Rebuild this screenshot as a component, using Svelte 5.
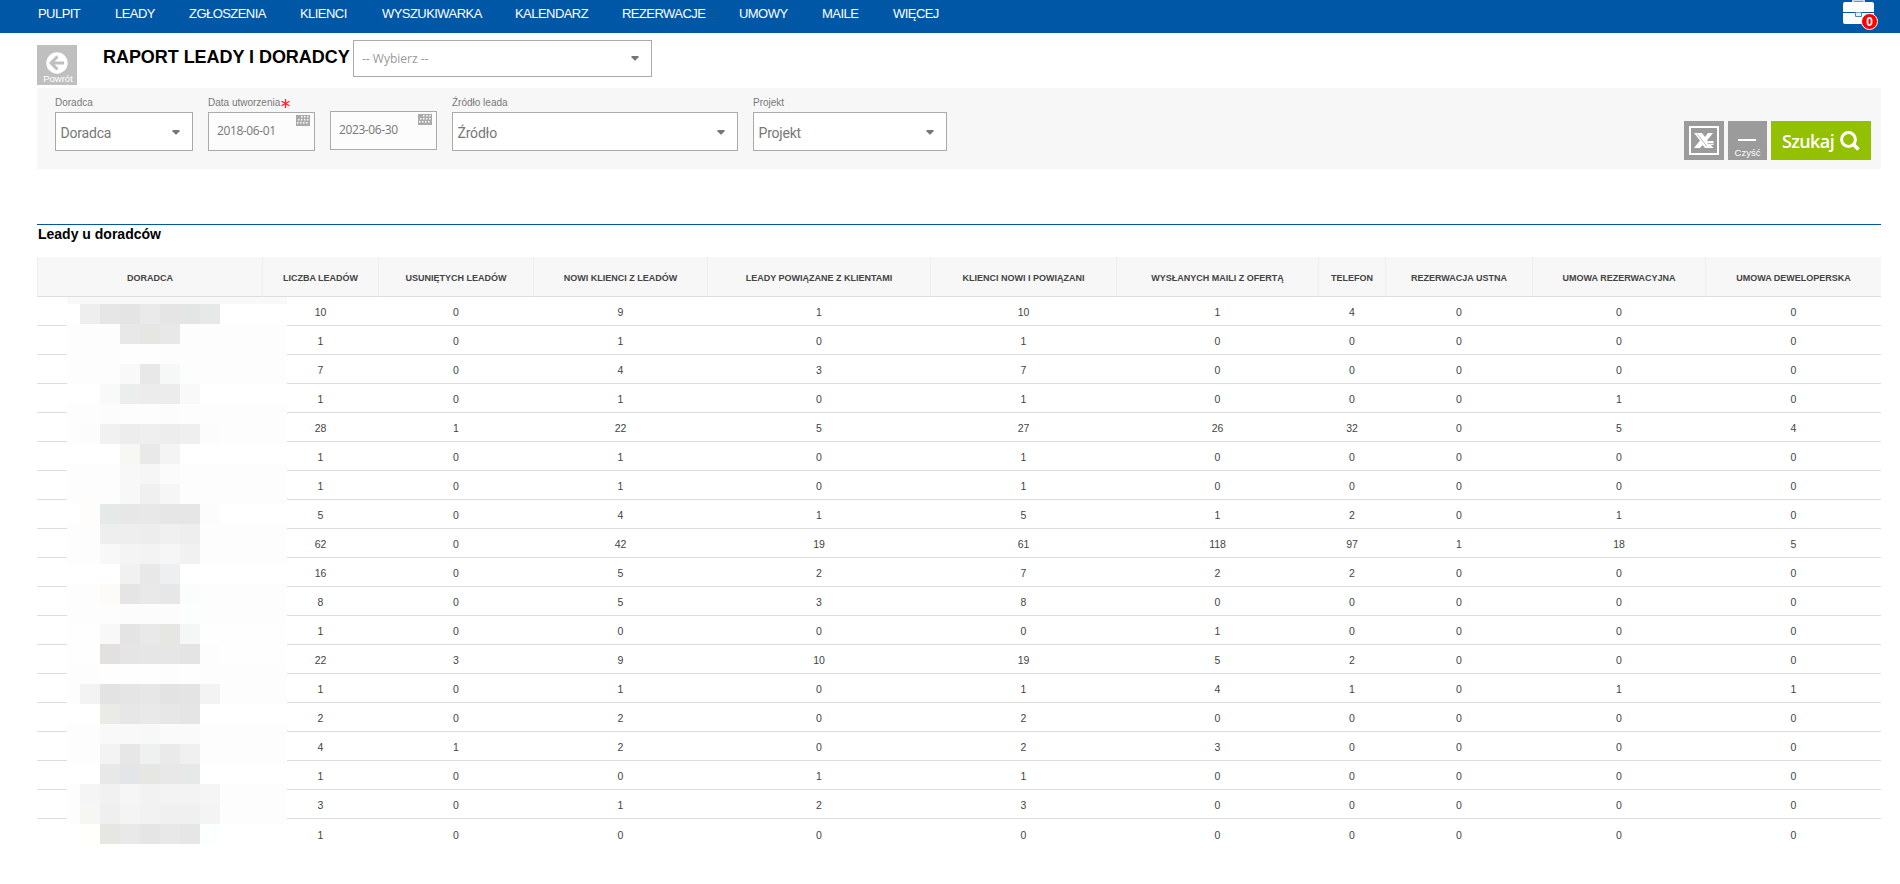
<script>
  const menu = [
    ['PULPIT', 38], ['LEADY', 115], ['ZGŁOSZENIA', 189], ['KLIENCI', 300],
    ['WYSZUKIWARKA', 382], ['KALENDARZ', 515], ['REZERWACJE', 622],
    ['UMOWY', 739], ['MAILE', 822], ['WIĘCEJ', 893],
  ].map(([label, start], i, all) => ({ label, width: (all[i + 1]?.[1] ?? start + 80) - start }));

  const columns = [
    ['DORADCA', 225], ['LICZBA LEADÓW', 116], ['USUNIĘTYCH LEADÓW', 155],
    ['NOWI KLIENCI Z LEADÓW', 174], ['LEADY POWIĄZANE Z KLIENTAMI', 223],
    ['KLIENCI NOWI I POWIĄZANI', 186], ['WYSŁANYCH MAILI Z OFERTĄ', 202],
    ['TELEFON', 67], ['REZERWACJA USTNA', 147], ['UMOWA REZERWACYJNA', 173],
    ['UMOWA DEWELOPERSKA', 176],
  ];

  const rows = [
    [10, 0, 9, 1, 10, 1, 4, 0, 0, 0],
    [1, 0, 1, 0, 1, 0, 0, 0, 0, 0],
    [7, 0, 4, 3, 7, 0, 0, 0, 0, 0],
    [1, 0, 1, 0, 1, 0, 0, 0, 1, 0],
    [28, 1, 22, 5, 27, 26, 32, 0, 5, 4],
    [1, 0, 1, 0, 1, 0, 0, 0, 0, 0],
    [1, 0, 1, 0, 1, 0, 0, 0, 0, 0],
    [5, 0, 4, 1, 5, 1, 2, 0, 1, 0],
    [62, 0, 42, 19, 61, 118, 97, 1, 18, 5],
    [16, 0, 5, 2, 7, 2, 2, 0, 0, 0],
    [8, 0, 5, 3, 8, 0, 0, 0, 0, 0],
    [1, 0, 0, 0, 0, 1, 0, 0, 0, 0],
    [22, 3, 9, 10, 19, 5, 2, 0, 0, 0],
    [1, 0, 1, 0, 1, 4, 1, 0, 1, 1],
    [2, 0, 2, 0, 2, 0, 0, 0, 0, 0],
    [4, 1, 2, 0, 2, 3, 0, 0, 0, 0],
    [1, 0, 0, 1, 1, 0, 0, 0, 0, 0],
    [3, 0, 1, 2, 3, 0, 0, 0, 0, 0],
    [1, 0, 0, 0, 0, 0, 0, 0, 0, 0],
  ];

  // Privacy mosaic: row background, then seven 20px tiles ("-" keeps the background)
  const mosaic = [
    'ff ee e6 e4 ea e5 e4e6e5 e7e9e8',
    'fd - - e8 e6e6e3 e8 - -',
    'fd - - fe fe fd - -',
    'fd - - f9 e8 f5f8f7 - -',
    'ff - f9 ebeeed ec ec f9 -',
    'fd - fc fd fd fc fd -',
    'fd fc f1 ed ef ed ef fc',
    'ff - - f7f7f3 e9 f4 - -',
    'fd - - f8 f6 fb - -',
    'fd - - f8 f0 f6 - -',
    'ff fffdfb e5e9e8 e7 e8 e6 e6 fc',
    'fd - ee ee ed f0 ee -',
    'fd - f8 f4 f3 f6 f1 -',
    'ff - - f1 e8 edeff1 - -',
    'fd - fcfbf8 e5 e9 e7 fafdfb -',
    'fd - fd fc fc fc fbfefd -',
    'fe - f8 e4 e9 e6e6e3 f4f7f6 -',
    'fe - e3e1e0 e5 e6 e6 e4 fd',
    'fd - fe fe fe fd fe -',
    'fd f3 e3 e5 e7 e3 e4 f3',
    'ff - eaeae7 e7 e9 e7 e5 -',
    'fd - f9 f9 f8 fa fa -',
    'fd - f3 e7 eef1ef ea f0 -',
    'ff - e8 e4e5e8 e6e6e3 e8 e6e9e8 -',
    'fd f5 f1 f6 f2 f3 f3 f5',
    'fd f6f6f2 ef f4 f2 f0 f0 f4',
    'ff fffffb e6e6e3 e9 e5 e8 e6 fbfffe',
  ].map((line) => line.split(' ').map((c) => (c === '-' ? 'transparent' : '#' + (c.length === 2 ? c.repeat(3) : c))));

  const dots = [
    [6, 2], [9, 2], [12, 2],
    [3, 5], [6, 5], [9, 5], [12, 5],
    [2, 8], [5, 8], [8, 8], [11, 8],
  ];
</script>

{#snippet arrow()}
  <svg class="arrow" width="8" height="5" viewBox="0 0 8 5"><path d="M.5 0h7v1.200L4.500 4.500h-1L.5 1.200z" fill="#777" /></svg>
{/snippet}

{#snippet calendar()}
  <svg class="calendar" width="14" height="11" viewBox="0 0 14 11">
    <path d="M0 0h14v11H0z" fill="#aaa" />
    {#each dots as [x, y]}<rect x={x - 1} y={y - 1} width="1.500" height="1.500" fill="#fff" />{/each}
  </svg>
{/snippet}

<div class="page">
  <nav>
    <div class="menu">
      {#each menu as item}<a style:width="{item.width}px">{item.label}</a>{/each}
    </div>
    <div class="case">
      <svg width="31" height="24" viewBox="0 0 31 24">
        <path d="M10 3V.5h11V3" fill="none" stroke="#c5d9eb" stroke-width="2" />
        <path d="M2 2h27q2 0 2 2v8H0V4q0-2 2-2z" fill="#fff" />
        <path d="M0 13h31v9q0 2-2 2H2q-2 0-2-2z" fill="#fff" />
        <path d="M12.500 12.500v4h6v-4" fill="#e8f0f8" stroke="#4d86bf" />
      </svg>
      <span class="badge">0</span>
    </div>
  </nav>

  <header>
    <div class="back">
      <svg width="22" height="22" viewBox="0 0 22 22">
        <circle cx="11" cy="11" r="10.700" fill="#fff" />
        <path d="M18 11H6M11.500 4.500L5 11l6.500 6.500" fill="none" stroke="#bfbfbf" stroke-width="3" />
      </svg>
      <span>Powrót</span>
    </div>
    <h1>RAPORT LEADY I DORADCY</h1>
    <div class="box choose"><span>-- Wybierz --</span>{@render arrow()}</div>
  </header>

  <section class="filters">
    <div class="field advisor"><span class="label">Doradca</span><div class="box"><span>Doradca</span>{@render arrow()}</div></div>
    <div class="field date">
      <span class="label">Data utworzenia<svg width="9" height="9" viewBox="0 0 9 9"><path d="M4.500 0v9M.5 2.300l8 4.400M8.500 2.300l-8 4.400" stroke="#f22" stroke-width="1.300" /></svg></span>
      <div class="box"><span>2018-06-01</span>{@render calendar()}</div>
    </div>
    <div class="field date second"><div class="box"><span>2023-06-30</span>{@render calendar()}</div></div>
    <div class="field source"><span class="label">Źródło leada</span><div class="box"><span>Źródło</span>{@render arrow()}</div></div>
    <div class="field project"><span class="label">Projekt</span><div class="box"><span>Projekt</span>{@render arrow()}</div></div>
    <div class="actions">
      <button class="excel" aria-label="Excel">
        <svg width="30" height="29" viewBox="0 0 30 29">
          <path d="M1 1h28v27H1z" fill="none" stroke="#fff" stroke-width="2" />
          <path d="M5 7h8l3 4 3-4h5l-6 7.500L24.500 22H16l-2.500-3-2.500 3H5l6-7.500z" fill="#fff" />
          <path d="M24.500 15h-6l3.500 4h2.500z" fill="#fff" />
          <path d="M18.500 17.500h6M8.500 8.500L18 20.500" stroke="#9b9b9b" stroke-width=".7" />
        </svg>
      </button>
      <button class="clear"><i></i><span>Czyść</span></button>
      <button class="search"><span>Szukaj</span>
        <svg width="20" height="20" viewBox="0 0 20 20"><circle cx="8.500" cy="8.500" r="6.900" fill="none" stroke="#fff" stroke-width="3" /><path d="M13.500 13.500l5 5" stroke="#fff" stroke-width="3.600" /></svg>
      </button>
    </div>
  </section>

  <section class="report">
    <h2>Leady u doradców</h2>
    <div class="tablewrap">
      <table>
        <colgroup>{#each columns as [, width]}<col style:width="{width}px" />{/each}</colgroup>
        <thead><tr>{#each columns as [name]}<th>{name}</th>{/each}</tr></thead>
        <tbody>
          {#each rows as row}<tr><td></td>{#each row as value}<td>{value}</td>{/each}</tr>{/each}
        </tbody>
      </table>
      <div class="mosaic">
        <div class="strip"></div>
        {#each mosaic as [base, ...tiles]}
          <div class="line" style:background={base}>
            {#each tiles as tile}<i style:background={tile}></i>{/each}
          </div>
        {/each}
      </div>
    </div>
  </section>
</div>

<style>
  :global(body) { background: #fff; }
  .page { width: 1900px; height: 884px; overflow: hidden; font-family: "Liberation Sans", Arial, sans-serif; color: #444; }
  nav { height: 33px; background: #0057a6; display: flex; justify-content: space-between; padding: 0 26px 0 38px; box-sizing: border-box; }
  .menu { display: flex; }
  .menu a { color: #fff; font-size: 13px; line-height: 27px; letter-spacing: -.55px; white-space: nowrap; }
  .case { position: relative; flex: 0 0 31px; }
  .case svg { display: block; }
  .badge { position: absolute; left: 18px; top: 13px; width: 15px; height: 15px; border: 1px solid #fff; border-radius: 50%; background: red; color: #fff; font: bold 12px/16px "Liberation Sans", sans-serif; text-align: center; }

  header { height: 55px; display: flex; padding-left: 37px; }
  .back { width: 40px; height: 40px; margin-top: 12px; background: #bfbfbf; display: flex; flex-direction: column; align-items: center; padding-top: 7px; box-sizing: border-box; color: #fff; font-size: 9.500px; line-height: 10px; }
  .back svg { flex: none; }
  .back span { margin-left: 2px; }
  h1 { margin: 12px 0 0 26px; width: 250px; font-size: 18px; line-height: 24px; letter-spacing: -.05px; color: #000; white-space: nowrap; }
  .box { box-sizing: border-box; border: 1px solid #aaa; background: #fff; position: relative; display: flex; justify-content: space-between; align-items: center; color: #777; }
  .choose { width: 299px; height: 37px; margin-top: 7px; padding: 0 12px 0 8px; font: 12px "Open Sans", sans-serif; color: #999; }

  .filters { margin-left: 37px; width: 1844px; height: 81px; background: #f7f7f7; display: flex; box-sizing: border-box; padding: 9px 10px 0 18px; }
  .field { margin-right: 15px; font-family: Roboto, sans-serif; }
  .label { display: flex; align-items: flex-start; height: 15px; font: 10px/11px "Liberation Sans", sans-serif; color: #777; white-space: nowrap; }
  .label svg { margin: 2px 0 0 1px; }
  .field .box { height: 39px; padding: 2px 12px 0 4.500px; font-size: 14px; letter-spacing: -.2px; }
  .advisor { width: 138px; }
  .source { width: 286px; }
  .project { width: 194px; }
  .date { width: 107px; }
  .field.date .box { background: #fcfcfc; padding: 0 4px 0 8px; font: 12px/36px "Open Sans", sans-serif; letter-spacing: -.4px; align-items: flex-start; }
  .date .calendar { margin-top: 2px; }
  .second { padding-top: 14px; }
  .actions { display: flex; margin-left: auto; padding-top: 24px; gap: 4px; }
  button { border: 0; padding: 0; background: #9b9b9b; color: #fff; height: 39px; display: flex; justify-content: center; align-items: center; }
  .excel { width: 40px; }
  .clear { width: 39px; flex-direction: column; justify-content: flex-start; }
  .clear i { width: 18px; height: 2px; background: #fff; margin: 18px 1px 6px 0; }
  .clear span { font: 9.500px/11px "Liberation Sans", sans-serif; }
  .search { width: 100px; background: #93c000; gap: 6px; }
  .search span { font: 600 18px "Open Sans", sans-serif; letter-spacing: -.6px; }

  .report { margin: 55px 0 0 37px; width: 1844px; border-top: 1px solid #0057a6; }
  h2 { margin: 0; height: 32px; padding-left: 1px; font-size: 14px; line-height: 19px; color: #000; }
  .tablewrap { position: relative; }
  table { width: 1844px; table-layout: fixed; border-collapse: separate; border-spacing: 0; }
  th { height: 40px; padding: 3px 0 0; box-sizing: border-box; border-bottom: 1px solid #ddd; border-left: 1px solid #eee; background: #f7f7f7; font-size: 9px; line-height: 12px; color: #444; white-space: nowrap; }
  td { height: 29px; padding: 2px 0 0 1px; box-sizing: border-box; border-bottom: 1px solid #ddd; text-align: center; font-size: 10.500px; line-height: 14px; color: #444; }
  tr:last-child td { border-bottom: 0; }
  .mosaic { position: absolute; left: 30px; top: 40px; width: 220px; }
  .strip { height: 7px; background: #f9f9f9; }
  .line { display: flex; width: 207px; height: 20px; padding-left: 13px; }
  .line i { width: 20px; height: 20px; }
</style>
